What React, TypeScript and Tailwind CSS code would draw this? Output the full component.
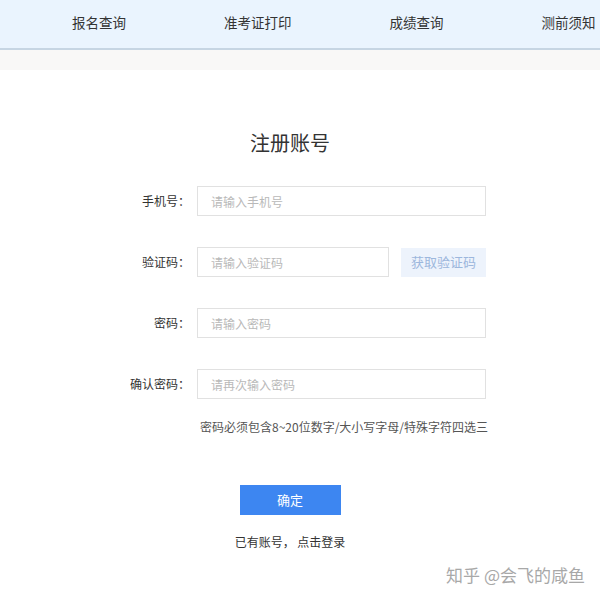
import React from "react";

const navItems = ["报名查询", "准考证打印", "成绩查询", "测前须知"];

const font = { fontFamily: '"Noto Sans CJK SC", "Microsoft YaHei", sans-serif' };

function Field({ label, placeholder, short }: { label: string; placeholder: string; short?: boolean }) {
  return (
    <div className="flex items-center h-[30px]">
      <label className="w-[190px] shrink-0 text-right text-[12px] text-[#333]">{label}</label>
      <div className="flex items-center ml-[7px] gap-[12px]">
        <input
          className={`${short ? "w-[192px]" : "w-[289px]"} h-[30px] border border-[#e1e1e1] bg-white px-[13px] text-[12px] text-[#333] outline-none placeholder:text-[#b9b9b9]`}
          placeholder={placeholder}
        />
        {short && (
          <button className="w-[85px] h-[29px] bg-[#edf3fc] text-[13px] text-[#9db7dd]">获取验证码</button>
        )}
      </div>
    </div>
  );
}

export default function App() {
  return (
    <div className="relative w-[600px] h-[599px] bg-white overflow-hidden" style={font}>
      <nav className="h-[50px] bg-[#eaf4fe] border-b-2 border-[#c6d5e3] flex gap-[98px] pl-[72px] pt-[12px]">
        {navItems.map((item) => (
          <div key={item} className="shrink-0 whitespace-nowrap text-[13.5px] leading-[20px] text-[#333]">
            {item}
          </div>
        ))}
      </nav>
      <div className="h-[20px] bg-[#f9f8f7]" />

      <div className="w-[580px] flex flex-col">
        <h1 className="mt-[61px] text-center text-[20px] leading-[24px] text-[#333]">注册账号</h1>

        <div className="mt-[31px] flex flex-col gap-[31px]">
          <Field label="手机号：" placeholder="请输入手机号" />
          <Field label="验证码：" placeholder="请输入验证码" short />
          <Field label="密码：" placeholder="请输入密码" />
          <Field label="确认密码：" placeholder="请再次输入密码" />
        </div>

        <p className="mt-[20px] ml-[200px] text-[12px] leading-[16px] text-[#555]">
          密码必须包含8~20位数字/大小写字母/特殊字符四选三
        </p>

        <button className="mt-[50px] mx-auto w-[101px] h-[30px] bg-[#3d86f1] text-white text-[13px]">确定</button>

        <p className="mt-[19px] text-center text-[12px] leading-[16px] text-[#333]">已有账号， 点击登录</p>
      </div>

      <div className="absolute right-[15px] bottom-[13px] text-[17px] leading-[22px] text-[#a8a8a8] whitespace-nowrap">
        知乎 @会飞的咸鱼
      </div>
    </div>
  );
}
